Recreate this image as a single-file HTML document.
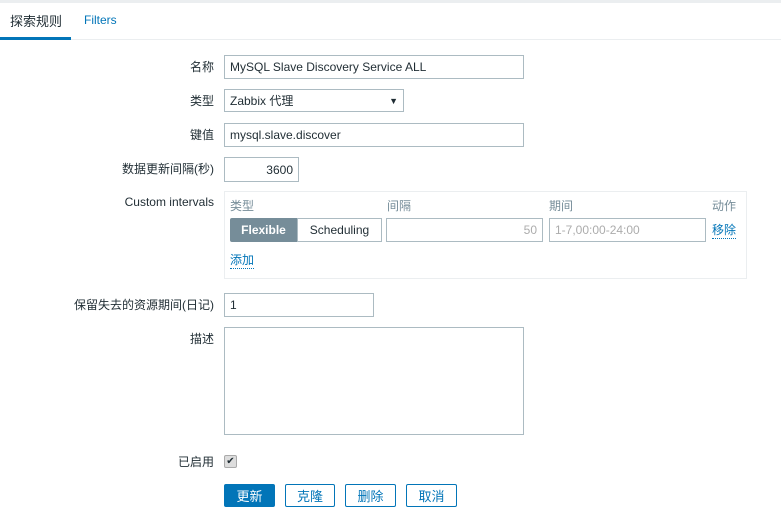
<!DOCTYPE html><html><head><meta charset="utf-8"><style>
body{margin:0;width:781px;height:516px;background:#fff;font:12px "Liberation Sans","Noto Sans CJK SC",sans-serif;color:#1f2c33;position:relative;overflow:hidden}
.a{position:absolute}
.lbl{position:absolute;right:567px;text-align:right;white-space:nowrap}
.in{position:absolute;box-sizing:border-box;border:1px solid #acbbc2;background:#fff;padding:0 5px;display:flex;align-items:center}
.btn{position:absolute;box-sizing:border-box;top:484px;height:23px;border:1px solid #0275b8;color:#0275b8;display:flex;align-items:center;justify-content:center;border-radius:2px;background:#fff;font-size:13px}
.lnk{color:#0275b8;border-bottom:1px dotted #0275b8}
.g{color:#768d99}
</style></head><body>
<div class="a" style="left:0;top:0;width:781px;height:3px;background:#ebeef0"></div>
<div class="a" style="left:0;top:39px;width:781px;height:1px;background:#ebeef0"></div>
<div class="a" style="left:0;top:37px;width:71px;height:3px;background:#0275b8"></div>
<div class="a" style="left:10px;top:11px;font-size:13px">探索规则</div>
<div class="a" style="left:84px;top:13px;color:#0275b8">Filters</div>

<div class="lbl" style="top:58px">名称</div>
<div class="in" style="left:224px;top:55px;width:300px;height:24px">MySQL Slave Discovery Service ALL</div>
<div class="lbl" style="top:92px">类型</div>
<div class="in" style="left:224px;top:89px;width:180px;height:23px">Zabbix 代理<span style="margin-left:auto;font-size:9px">▼</span></div>
<div class="lbl" style="top:126px">键值</div>
<div class="in" style="left:224px;top:123px;width:300px;height:24px">mysql.slave.discover</div>
<div class="lbl" style="top:160px">数据更新间隔(秒)</div>
<div class="in" style="left:224px;top:157px;width:75px;height:25px;justify-content:flex-end">3600</div>
<div class="lbl" style="top:195px">Custom intervals</div>
<div class="a" style="left:224px;top:191px;width:521px;height:86px;border:1px solid #ebeef0"></div>
<div class="a g" style="left:230px;top:197px">类型</div>
<div class="a g" style="left:387px;top:197px">间隔</div>
<div class="a g" style="left:549px;top:197px">期间</div>
<div class="a g" style="left:712px;top:197px">动作</div>
<div class="a" style="left:230px;top:218px;width:67px;height:24px;background:#768d99;color:#fff;font-weight:bold;display:flex;align-items:center;justify-content:center;border-radius:2px 0 0 2px">Flexible</div>
<div class="in" style="left:297px;top:218px;width:85px;height:24px;justify-content:center">Scheduling</div>
<div class="in" style="left:386px;top:218px;width:157px;height:24px;justify-content:flex-end;color:#acacac">50</div>
<div class="in" style="left:549px;top:218px;width:157px;height:24px;color:#acacac">1-7,00:00-24:00</div>
<div class="a lnk" style="left:712px;top:221px">移除</div>
<div class="a lnk" style="left:230px;top:251px">添加</div>
<div class="lbl" style="top:296px">保留失去的资源期间(日记)</div>
<div class="in" style="left:224px;top:293px;width:150px;height:24px">1</div>
<div class="lbl" style="top:330px">描述</div>
<div class="in" style="left:224px;top:327px;width:300px;height:108px"></div>
<div class="lbl" style="top:453px">已启用</div>
<div class="a" style="left:224px;top:455px;width:11px;height:11px;border:1px solid #aaa;background:#ddd;font-size:10px;line-height:11px;text-align:center;border-radius:2px">✔</div>
<div class="btn" style="left:224px;width:51px;background:#0275b8;color:#fff">更新</div>
<div class="btn" style="left:285px;width:50px">克隆</div>
<div class="btn" style="left:345px;width:51px">删除</div>
<div class="btn" style="left:406px;width:51px">取消</div>
</body></html>
